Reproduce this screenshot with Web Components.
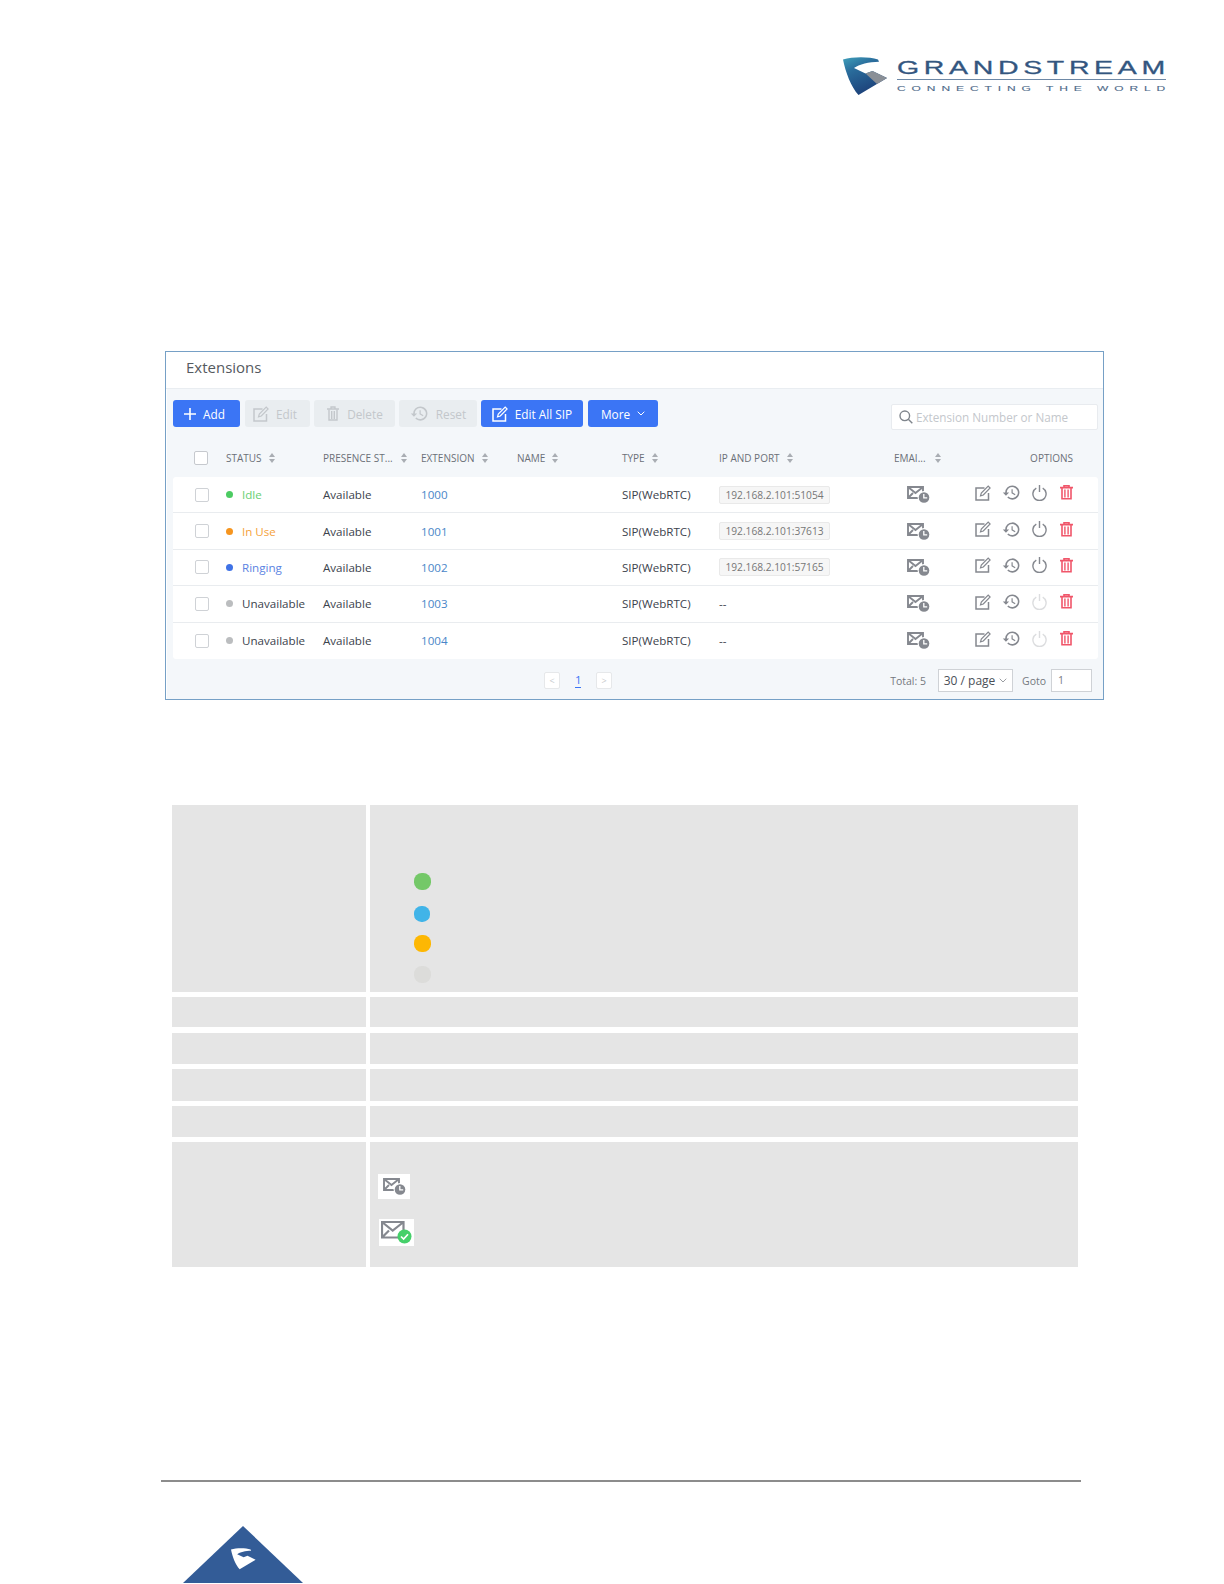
<!DOCTYPE html>
<html>
<head>
<meta charset="utf-8">
<title>Extensions</title>
<style>
html, body { margin: 0; padding: 0; background: #fff; }
body { width: 1224px; height: 1584px; overflow: hidden; font-family: "Open Sans", "Liberation Sans", sans-serif; }
gs-page { display: block; }
</style>
</head>
<body>
<gs-page>
  <gs-logo slot="logo"></gs-logo>

  <gs-panel title-text="Extensions">
    <gs-button slot="toolbar" kind="primary" icon="plus" style="width:67px;padding-right:4px">Add</gs-button>
    <gs-button slot="toolbar" kind="disabled" icon="edit" style="width:65px;margin-left:5px;padding-right:5px">Edit</gs-button>
    <gs-button slot="toolbar" kind="disabled" icon="bin" style="width:81px;margin-left:4px">Delete</gs-button>
    <gs-button slot="toolbar" kind="disabled" icon="history" style="width:78px;margin-left:4px">Reset</gs-button>
    <gs-button slot="toolbar" kind="primary" icon="edit" style="width:102px;margin-left:4px">Edit All SIP</gs-button>
    <gs-button slot="toolbar" kind="primary" icon="caret" style="width:70px;margin-left:5px">More</gs-button>

    <gs-ext-row status="Idle" tone="idle" ext="1000" ip="192.168.2.101:51054"></gs-ext-row>
    <gs-ext-row status="In Use" tone="busy" ext="1001" ip="192.168.2.101:37613"></gs-ext-row>
    <gs-ext-row status="Ringing" tone="ring" ext="1002" ip="192.168.2.101:57165"></gs-ext-row>
    <gs-ext-row status="Unavailable" tone="off" ext="1003"></gs-ext-row>
    <gs-ext-row status="Unavailable" tone="off" ext="1004" last></gs-ext-row>
  </gs-panel>

  <gs-info-table>
    <gs-info-row style="height:187px">
      <gs-dots></gs-dots>
    </gs-info-row>
    <gs-info-row style="height:30px"></gs-info-row>
    <gs-info-row style="height:31px;margin-top:1px"></gs-info-row>
    <gs-info-row style="height:32px"></gs-info-row>
    <gs-info-row style="height:31px"></gs-info-row>
    <gs-info-row style="height:125px">
      <gs-mail-samples></gs-mail-samples>
    </gs-info-row>
  </gs-info-table>

  <gs-footer></gs-footer>
</gs-page>

<script>
const GRAY = '#85888f';

const ICONS = {
  plus: `<svg width="12" height="12" viewBox="0 0 12 12"><path d="M6 0v12M0 6h12" stroke="currentColor" stroke-width="1.6" fill="none"/></svg>`,
  edit: `<svg width="16" height="16" viewBox="0 0 16 16" fill="none" stroke="currentColor"><path d="M9.5 3H1v12h12.5V8" stroke-width="1.5"/><path d="M5.5 10.8l.8-2.8L13.2 1l1.9 2-6.8 7z" stroke-width="1.2"/></svg>`,
  bin: `<svg width="14" height="15" viewBox="0 0 14 15" fill="none" stroke="currentColor"><path d="M1 3h12M5 3V1h4v2" stroke-width="1.3"/><path d="M3 3.5v10.5h8V3.5M5.7 5v8M8.3 5v8" stroke-width="1.4"/></svg>`,
  history: `<svg width="19" height="19" viewBox="0 0 24 24" fill="currentColor"><path d="M13 3a9 9 0 0 0-9 9H1l4 4 4-4H6a7 7 0 1 1 2.05 4.95l-1.41 1.41A9 9 0 1 0 13 3zm-1 5v5l4.25 2.52.77-1.28-3.52-2.09V8z"/></svg>`,
  caret: `<svg width="8" height="5" viewBox="0 0 8 5"><path d="M.7.7L4 4l3.3-3.3" stroke="currentColor" stroke-width="1" fill="none"/></svg>`,
  power: `<svg width="15" height="16" viewBox="0 0 15 16" fill="none" stroke="currentColor" stroke-width="1.4"><path d="M4.3 3.2a6.6 6.6 0 1 0 6.4 0M7.5 0v7"/></svg>`,
  trash: `<svg width="13" height="15" viewBox="0 0 13 15" fill="none" stroke="#f0566a"><path d="M0 2.6h13M4 2.4V.8h5v1.6" stroke-width="1.6"/><path d="M2 3v10.8h9V3" stroke-width="1.6"/><path d="M4.9 4.5v8M8.1 4.5v8" stroke-width="1.4"/></svg>`,
  search: `<svg width="14" height="14" viewBox="0 0 14 14" fill="none" stroke="#7f858c" stroke-width="1.4"><circle cx="5.8" cy="5.8" r="4.8"/><path d="M9.3 9.3l4 4"/></svg>`,
  mailClock: `<svg width="23" height="17" viewBox="0 0 23 17" fill="none"><path d="M1 1h15v11H1zM1 1l7.5 6L16 1M1 12l5-5" stroke="${GRAY}" stroke-width="1.9"/><circle cx="17" cy="11.5" r="6.4" fill="#fff"/><circle cx="17" cy="11.5" r="5.3" fill="${GRAY}"/><path d="M16.8 8v3.8h3.4" stroke="#fff" stroke-width="1.3"/></svg>`,
  mailOk: `<svg width="31" height="23" viewBox="0 0 31 23" fill="none"><path d="M1 1h21.5v15.5H1zM1 1l10.7 8.5L22.5 1M1 16.5l7-7" stroke="${GRAY}" stroke-width="2.2"/><circle cx="23.5" cy="15.5" r="7" fill="#45d06a"/><path d="M20 15.5l2.6 2.6 4.4-4.8" stroke="#fff" stroke-width="1.7"/></svg>`,
  sort: `<svg width="6" height="10" viewBox="0 0 6 10" fill="#a9adb3"><path d="M3 0l3 4H0zM3 10l3-4H0z"/></svg>`,
};

// shield mark of the logo, drawn in a 44x38 box
const MARK = `M0 2.5C10-.5 26-.5 35 2.5l1 2.2C26 5 16 7 11 11l11.5 5.5 7-2.5L44 21 15.5 38C8 30 2.5 15 0 2.5z`;

function define(name, html, proto) {
  const template = document.createElement('template');
  template.innerHTML = html;
  class Element extends HTMLElement {
    constructor() {
      super();
      this.attachShadow({ mode: 'open' });
      this.shadowRoot.appendChild(template.content.cloneNode(true));
    }
    connectedCallback() {
      if (proto) proto.call(this, this.shadowRoot);
    }
  }
  if (!customElements.get(name)) customElements.define(name, Element);
}

define('gs-logo', `
<style>
:host { display: flex; justify-content: flex-end; align-items: flex-start; height: 38px; padding: 57px 58px 0 0; color: #33567f; font-family: "Liberation Sans", sans-serif; }
svg { margin: 0 10px 0 0; }
.words { width: 269px; }
.name, .tag { display: block; white-space: nowrap; transform-origin: 0 0; }
.name { width: 179px; font-size: 19px; line-height: 22px; height: 22px; letter-spacing: 3.1px; transform: scaleX(1.5); -webkit-text-stroke: .3px currentColor; }
.rule { height: 1px; background: #6d88a6; }
.tag { width: 168px; font-size: 7.5px; line-height: 9px; letter-spacing: 3.7px; color: #4f6b8a; transform: scaleX(1.6); margin-top: 4px; -webkit-text-stroke: .1px currentColor; }
</style>
<svg width="44" height="38" viewBox="0 0 44 38">
  <defs>
    <linearGradient id="g" x1="0" y1="0" x2="0.5" y2="1">
      <stop offset="0" stop-color="#3fa0bb"/><stop offset=".35" stop-color="#2a6d9c"/><stop offset="1" stop-color="#1c3f78"/>
    </linearGradient>
  </defs>
  <path fill="url(#g)" d="${MARK}"/>
  <path fill="#8a8f96" d="M22.5 16.5l7-2.5L44 21l-10 6z"/>
</svg>
<div class="words">
  <span class="name">GRANDSTREAM</span>
  <div class="rule"></div>
  <span class="tag">CONNECTING THE WORLD</span>
</div>
`);

define('gs-panel', `
<style>
:host { display: block; box-sizing: border-box; width: 939px; height: 349px; margin: 256px 0 0 165px; border: 1px solid #76a0c6; background: #fff; --cols: 53px 97px 98px 96px 105px 97px 175px 81px 123px; }
.title { height: 37px; box-sizing: border-box; padding: 3px 0 0 20px; font-size: 15px; line-height: 24px; color: #555a60; border-bottom: 1px solid #e9edf1; }
.body { height: 310px; margin: 0 0 0 1px; background: #f4f7fa; box-sizing: border-box; padding: 11px 5px 0 6px; }
.bar { display: flex; align-items: flex-start; height: 27px; margin-bottom: 13px; }
.search { margin-left: auto; margin-top: 4px; width: 207px; height: 26px; box-sizing: border-box; background: #fff; border: 1px solid #e8ebef; border-radius: 2px; display: flex; align-items: center; padding-left: 7px; gap: 3px; color: #c4c7cc; font-size: 11.7px; white-space: nowrap; }
.card { background: #fff; border-radius: 3px; }
</style>
<div class="title"></div>
<div class="body">
  <div class="bar">
    <slot name="toolbar"></slot>
    <div class="search">${ICONS.search}<span>Extension Number or Name</span></div>
  </div>
  <gs-ext-head></gs-ext-head>
  <div class="card"><slot></slot></div>
  <gs-pager></gs-pager>
</div>
`, function (root) {
  root.querySelector('.title').textContent = this.getAttribute('title-text');
});

define('gs-button', `
<style>
:host { display: flex; flex: none; align-items: center; justify-content: center; gap: 7px; box-sizing: border-box; height: 27px; border-radius: 3px; font-size: 11.8px; white-space: nowrap; }
:host([kind="primary"]) { background: #3b75f5; color: #fff; }
:host([kind="disabled"]) { background: #e9edf0; color: #c3c7cb; }
#ic { display: flex; align-items: center; }
</style>
<span id="ic"></span><slot></slot>
`, function (root) {
  const name = this.getAttribute('icon');
  const ic = root.querySelector('#ic');
  ic.innerHTML = ICONS[name];
  // the caret sits after the label
  if (name === 'caret') root.appendChild(ic);
});

define('gs-ext-head', `
<style>
:host { display: grid; grid-template-columns: var(--cols); align-items: center; height: 37px; width: 925px; font-size: 10px; color: #6b7078; white-space: nowrap; }
.c { display: flex; align-items: center; gap: 7px; padding-bottom: 1px; }
.box { width: 12px; height: 12px; border: 1px solid #c6c9ce; border-radius: 2px; background: #fff; margin-left: 21px; }
.opt { justify-content: flex-end; padding-right: 25px; }
</style>
<div class="c"><div class="box"></div></div>
<div class="c">STATUS ${ICONS.sort}</div>
<div class="c" style="gap:8px">PRESENCE ST... ${ICONS.sort}</div>
<div class="c">EXTENSION ${ICONS.sort}</div>
<div class="c">NAME ${ICONS.sort}</div>
<div class="c">TYPE ${ICONS.sort}</div>
<div class="c">IP AND PORT ${ICONS.sort}</div>
<div class="c" style="gap:9px">EMAI... ${ICONS.sort}</div>
<div class="c opt">OPTIONS</div>
`);

define('gs-ext-row', `
<style>
:host { display: grid; grid-template-columns: var(--cols); align-items: center; box-sizing: border-box; height: 36.4px; border-bottom: 1px solid #e9ecef; font-size: 11.6px; color: #3c434d; white-space: nowrap; }
:host([last]) { border-bottom: 0; }
.box { width: 12px; height: 12px; border: 1px solid #cfd2d6; border-radius: 2px; margin-left: 22px; }
.st { display: flex; align-items: center; gap: 9px; }
.dot { width: 7px; height: 7px; border-radius: 50%; }
:host([tone="idle"]) .dot { background: #4ccb62; } :host([tone="idle"]) .st { color: #67cf72; }
:host([tone="busy"]) .dot { background: #f6951f; } :host([tone="busy"]) .st { color: #f5a23c; }
:host([tone="ring"]) .dot { background: #3f72e6; } :host([tone="ring"]) .st { color: #5b83e2; }
:host([tone="off"]) .dot { background: #bbbdbf; } :host([tone="off"]) .st { color: #3c434d; }
.ext { color: #4a86c8; }
.tag { display: inline-block; box-sizing: border-box; width: 111px; height: 18px; line-height: 16px; text-align: center; font-size: 10.2px; background: #f6f6f6; border: 1px solid #e9e9e9; border-radius: 2px; color: #777; }
.mail { display: flex; margin-left: 13px; }
.opts { display: flex; align-items: center; color: ${GRAY}; padding-bottom: 4px; }
.opts > * { flex: none; display: flex; }
.off { color: #dcdddf; }
</style>
<div class="box"></div>
<div class="st"><span class="dot"></span><span id="status"></span></div>
<div>Available</div>
<div class="ext" id="ext"></div>
<div></div>
<div>SIP(WebRTC)</div>
<div id="ip"></div>
<div class="mail">${ICONS.mailClock}</div>
<div class="opts">
  <span>${ICONS.edit}</span>
  <span style="margin-left:11px">${ICONS.history}</span>
  <span style="margin-left:11px" id="pw">${ICONS.power}</span>
  <span style="margin-left:13px">${ICONS.trash}</span>
</div>
`, function (root) {
  root.querySelector('#status').textContent = this.getAttribute('status');
  root.querySelector('#ext').textContent = this.getAttribute('ext');
  const ip = this.getAttribute('ip');
  const cell = root.querySelector('#ip');
  if (ip) {
    const tag = document.createElement('span');
    tag.className = 'tag';
    tag.textContent = ip;
    cell.appendChild(tag);
  } else {
    cell.textContent = '--';
    root.querySelector('#pw').classList.add('off');
  }
});

define('gs-pager', `
<style>
:host { display: flex; align-items: center; height: 40px; padding-left: 371px; padding-top: 4px; box-sizing: border-box; width: 925px; font-size: 10.5px; color: #75797f; white-space: nowrap; }
.nav { width: 16px; height: 17px; box-sizing: border-box; background: #fff; border: 1px solid #e6e8ea; border-radius: 2px; display: flex; align-items: center; justify-content: center; color: #c8cacd; font-size: 9px; }
.cur { margin: 0 15px; width: 6px; text-align: center; color: #3b75f5; border-bottom: 1px solid #3b75f5; line-height: 14px; font-size: 11.5px; }
.total { margin-left: auto; }
.sel { margin-left: 12px; width: 75px; height: 23px; box-sizing: border-box; background: #fff; border: 1px solid #cfd2d6; display: flex; align-items: center; justify-content: center; gap: 4px; font-size: 12px; color: #4a4f57; }
.sel svg { color: #9a9da2; }
.goto { margin-left: 9px; width: 22px; }
.inp { margin: 0 6px 0 7px; width: 41px; height: 23px; box-sizing: border-box; background: #fff; border: 1px solid #cfd2d6; padding-left: 6px; line-height: 21px; color: #75797f; }
</style>
<span class="nav">&lt;</span><span class="cur">1</span><span class="nav">&gt;</span>
<span class="total">Total: 5</span>
<span class="sel">30 / page ${ICONS.caret}</span>
<span class="goto">Goto</span>
<span class="inp">1</span>
`);

define('gs-info-table', `
<style>
:host { display: flex; flex-direction: column; gap: 5px; width: 906px; margin: 105px 0 0 172px; }
</style>
<slot></slot>
`);

define('gs-info-row', `
<style>
:host { display: grid; grid-template-columns: 194px 708px; column-gap: 4px; }
div { background: #e5e5e5; }
</style>
<div></div>
<div><slot></slot></div>
`);

define('gs-dots', `
<style>
:host { display: block; padding: 68px 0 0 44px; }
i { display: block; width: 17px; height: 17px; border-radius: 46%; }
</style>
<i style="background:#74c868"></i>
<i style="background:#41b4e8;width:16px;height:16px;margin-top:16px"></i>
<i style="background:#fdb703;margin-top:13px"></i>
<i style="background:#dcdcda;margin-top:14px"></i>
`);

define('gs-mail-samples', `
<style>
:host { display: block; padding: 32px 0 0 8px; }
span { display: flex; align-items: center; justify-content: center; background: #fff; }
span:first-child svg { width: 28px; height: 21px; }
</style>
<span style="width:32px;height:25px">${ICONS.mailClock}</span>
<span style="width:35px;height:27px;margin:20px 0 0 1px">${ICONS.mailOk}</span>
`);

define('gs-footer', `
<style>
:host { display: block; margin: 213px 0 0 161px; }
.line { width: 920px; height: 2px; background: #8c8c8c; }
svg { display: block; margin: 44px 0 0 22px; }
</style>
<div class="line"></div>
<svg width="120" height="57" viewBox="0 0 120 57">
  <path fill="#335c97" d="M60 0L120 57H0z"/>
  <path fill="#fff" transform="translate(48 22) scale(.56)" d="${MARK}"/>
</svg>
`);

define('gs-page', `
<style>
:host { display: block; width: 1224px; }
</style>
<slot name="logo"></slot>
<slot></slot>
`);
</script>
</body>
</html>
